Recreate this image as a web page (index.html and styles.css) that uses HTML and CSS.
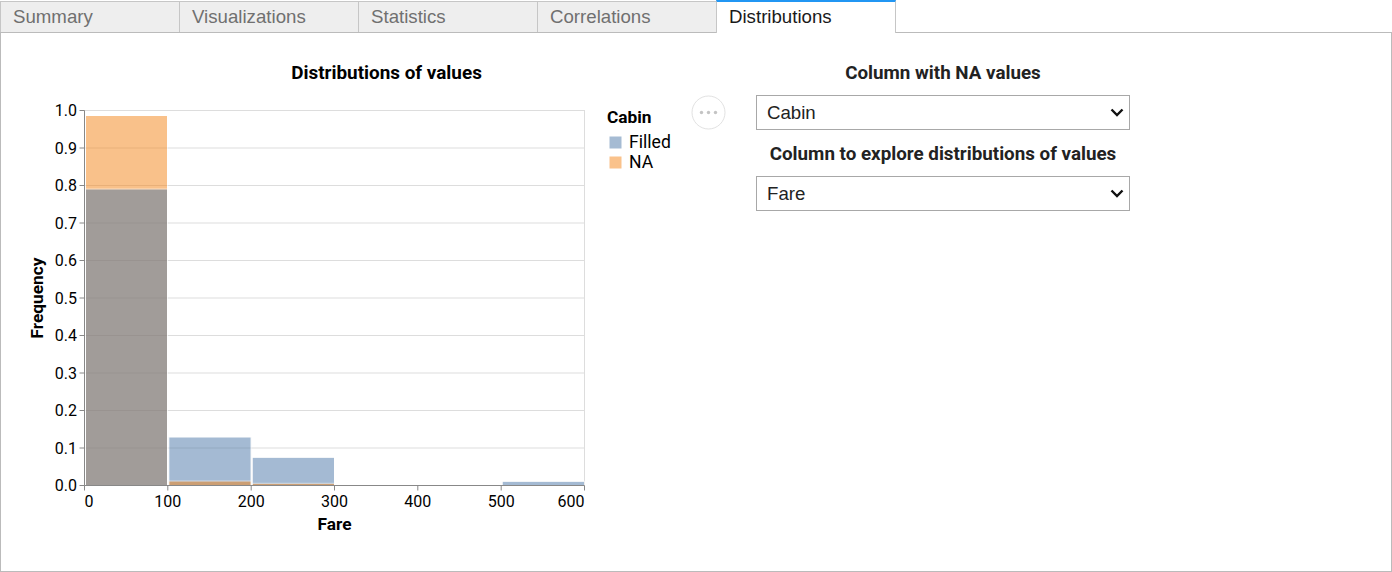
FILE: index.html
```html
<!DOCTYPE html>
<html>
<head>
<meta charset="utf-8">
<title>Distributions</title>
<link rel="stylesheet" href="styles.css">
</head>
<body>
<div class="tabbar">
  <div class="tab">Summary</div>
  <div class="tab">Visualizations</div>
  <div class="tab">Statistics</div>
  <div class="tab">Correlations</div>
  <div class="tab active">Distributions</div>
</div>
<div class="panel">
  <svg class="chart" width="740" height="538" viewBox="0 0 740 538" xmlns="http://www.w3.org/2000/svg">
    <g transform="translate(-1,-33)">
      <text class="title" x="386.5" y="79" text-anchor="middle">Distributions of values</text>
      <!-- grid -->
      <g stroke="#dddddd" stroke-width="1">
        <line x1="84.5" x2="584.5" y1="448" y2="448"/>
        <line x1="84.5" x2="584.5" y1="410.5" y2="410.5"/>
        <line x1="84.5" x2="584.5" y1="373" y2="373"/>
        <line x1="84.5" x2="584.5" y1="335.5" y2="335.5"/>
        <line x1="84.5" x2="584.5" y1="298" y2="298"/>
        <line x1="84.5" x2="584.5" y1="260.5" y2="260.5"/>
        <line x1="84.5" x2="584.5" y1="223" y2="223"/>
        <line x1="84.5" x2="584.5" y1="185.5" y2="185.5"/>
        <line x1="84.5" x2="584.5" y1="148" y2="148"/>
        <rect x="84.5" y="110.5" width="500" height="375" fill="none"/>
      </g>
      <!-- bars -->
      <g stroke="#ffffff" stroke-width="1">
        <rect x="85.5" y="115.5" width="82" height="370" fill="#f58518" opacity="0.5"/>
        <rect x="85.5" y="189" width="82" height="296.5" fill="#4c78a8" opacity="0.5"/>
        <rect x="168.8" y="437" width="82.3" height="48.5" fill="#4c78a8" opacity="0.5"/>
        <rect x="168.8" y="481" width="82.3" height="4.5" fill="#f58518" opacity="0.5"/>
        <rect x="252.2" y="457.3" width="82.3" height="28.2" fill="#4c78a8" opacity="0.5"/>
        <rect x="252.2" y="483.3" width="82.3" height="2.2" fill="#f58518" opacity="0.5"/>
        <rect x="502.2" y="481.3" width="82.3" height="4.2" fill="#4c78a8" opacity="0.5"/>
      </g>
      <!-- y axis -->
      <g stroke="#888888" stroke-width="1">
        <line x1="84.5" x2="84.5" y1="110.5" y2="485.5"/>
        <line x1="79.5" x2="84.5" y1="485.5" y2="485.5"/>
        <line x1="79.5" x2="84.5" y1="448" y2="448"/>
        <line x1="79.5" x2="84.5" y1="410.5" y2="410.5"/>
        <line x1="79.5" x2="84.5" y1="373" y2="373"/>
        <line x1="79.5" x2="84.5" y1="335.5" y2="335.5"/>
        <line x1="79.5" x2="84.5" y1="298" y2="298"/>
        <line x1="79.5" x2="84.5" y1="260.5" y2="260.5"/>
        <line x1="79.5" x2="84.5" y1="223" y2="223"/>
        <line x1="79.5" x2="84.5" y1="185.5" y2="185.5"/>
        <line x1="79.5" x2="84.5" y1="148" y2="148"/>
        <line x1="79.5" x2="84.5" y1="110.5" y2="110.5"/>
      </g>
      <g class="tick" text-anchor="end">
        <text x="77" y="491.3">0.0</text>
        <text x="77" y="453.8">0.1</text>
        <text x="77" y="416.3">0.2</text>
        <text x="77" y="378.8">0.3</text>
        <text x="77" y="341.3">0.4</text>
        <text x="77" y="303.8">0.5</text>
        <text x="77" y="266.3">0.6</text>
        <text x="77" y="228.8">0.7</text>
        <text x="77" y="191.3">0.8</text>
        <text x="77" y="153.8">0.9</text>
        <text x="77" y="116.3">1.0</text>
      </g>
      <text class="axistitle" transform="translate(43,298) rotate(-90)" text-anchor="middle">Frequency</text>
      <!-- x axis -->
      <g stroke="#888888" stroke-width="1">
        <line x1="84.5" x2="584.5" y1="485.5" y2="485.5"/>
        <line x1="84.5" x2="84.5" y1="485.5" y2="490.5"/>
        <line x1="167.8" x2="167.8" y1="485.5" y2="490.5"/>
        <line x1="251.2" x2="251.2" y1="485.5" y2="490.5"/>
        <line x1="334.5" x2="334.5" y1="485.5" y2="490.5"/>
        <line x1="417.8" x2="417.8" y1="485.5" y2="490.5"/>
        <line x1="501.2" x2="501.2" y1="485.5" y2="490.5"/>
        <line x1="584.5" x2="584.5" y1="485.5" y2="490.5"/>
      </g>
      <g class="tick" text-anchor="middle">
        <text x="84.5" y="507" text-anchor="start">0</text>
        <text x="167.8" y="507">100</text>
        <text x="251.2" y="507">200</text>
        <text x="334.5" y="507">300</text>
        <text x="417.8" y="507">400</text>
        <text x="501.2" y="507">500</text>
        <text x="584.5" y="507" text-anchor="end">600</text>
      </g>
      <text class="axistitle" x="334.5" y="530" text-anchor="middle">Fare</text>
      <!-- legend -->
      <text class="axistitle" x="607" y="123.3">Cabin</text>
      <rect x="609.5" y="136.5" width="12" height="12" fill="#4c78a8" opacity="0.5"/>
      <text class="legend" x="629" y="147.5">Filled</text>
      <rect x="609.5" y="156.5" width="12" height="12" fill="#f58518" opacity="0.5"/>
      <text class="legend" x="629" y="167.5">NA</text>
      <!-- actions button -->
      <circle cx="708.5" cy="112.5" r="16.5" fill="#ffffff" stroke="#e2e2e2" stroke-width="1"/>
      <g fill="#c4c4c4">
        <circle cx="701.5" cy="112.5" r="1.7"/>
        <circle cx="708.5" cy="112.5" r="1.7"/>
        <circle cx="715.5" cy="112.5" r="1.7"/>
      </g>
    </g>
  </svg>
  <div class="controls">
    <div class="label">Column with NA values</div>
    <div class="select">
      <span class="value">Cabin</span>
      <svg class="chev" width="14" height="9" viewBox="0 0 14 9"><path d="M1.5 1.5 L7 7 L12.5 1.5" fill="none" stroke="#111" stroke-width="2.4"/></svg>
    </div>
    <div class="label">Column to explore distributions of values</div>
    <div class="select">
      <span class="value">Fare</span>
      <svg class="chev" width="14" height="9" viewBox="0 0 14 9"><path d="M1.5 1.5 L7 7 L12.5 1.5" fill="none" stroke="#111" stroke-width="2.4"/></svg>
    </div>
  </div>
</div>
</body>
</html>
```

FILE: styles.css
```css
html, body {
  margin: 0;
  padding: 0;
  background: #ffffff;
}

body {
  width: 1392px;
  height: 572px;
  overflow: hidden;
}

.tabbar {
  display: flex;
  align-items: flex-end;
  height: 32px;
}

.tab {
  box-sizing: border-box;
  width: 180px;
  height: 31px;
  margin-left: -1px;
  padding-left: 12px;
  background: #eeeeee;
  border: 1px solid #c6c6c6;
  border-bottom: none;
  font-family: "Liberation Sans", Arial, sans-serif;
  font-size: 18.67px;
  line-height: 30px;
  color: #707070;
  white-space: nowrap;
}

.tab:first-child {
  margin-left: 0;
}

.tab.active {
  position: relative;
  z-index: 1;
  height: 33px;
  margin-bottom: -1px;
  background: #ffffff;
  border-top: 2px solid #2196f3;
  color: #1a1a1a;
}

.panel {
  box-sizing: border-box;
  width: 1392px;
  height: 540px;
  border: 1px solid #bbbbbb;
  display: flex;
  align-items: flex-start;
}

.chart {
  display: block;
  flex: none;
}

.chart text {
  font-family: Roboto, "Noto Sans", sans-serif;
  fill: #000000;
}

.chart .title {
  font-size: 18.9px;
  font-weight: 700;
}

.chart .tick text {
  font-size: 16px;
}

.chart .axistitle {
  font-size: 17.3px;
  font-weight: 700;
}

.chart .legend {
  font-size: 17.6px;
}

.controls {
  flex: none;
  width: 374px;
  margin-left: 15px;
  padding-top: 28px;
  display: flex;
  flex-direction: column;
}

.label {
  font-family: Roboto, "Noto Sans", sans-serif;
  font-weight: 700;
  font-size: 18.8px;
  line-height: 24px;
  color: #222222;
  text-align: center;
  margin-bottom: 10px;
}

.select {
  position: relative;
  box-sizing: border-box;
  height: 35px;
  border: 1px solid #a8a8a8;
  padding-left: 10px;
  margin-bottom: 12px;
  display: flex;
  align-items: center;
  font-family: "Liberation Sans", Arial, sans-serif;
  font-size: 18.67px;
  color: #222222;
}

.select .value {
  flex: 1;
}

.select .chev {
  margin-right: 5px;
}
```
